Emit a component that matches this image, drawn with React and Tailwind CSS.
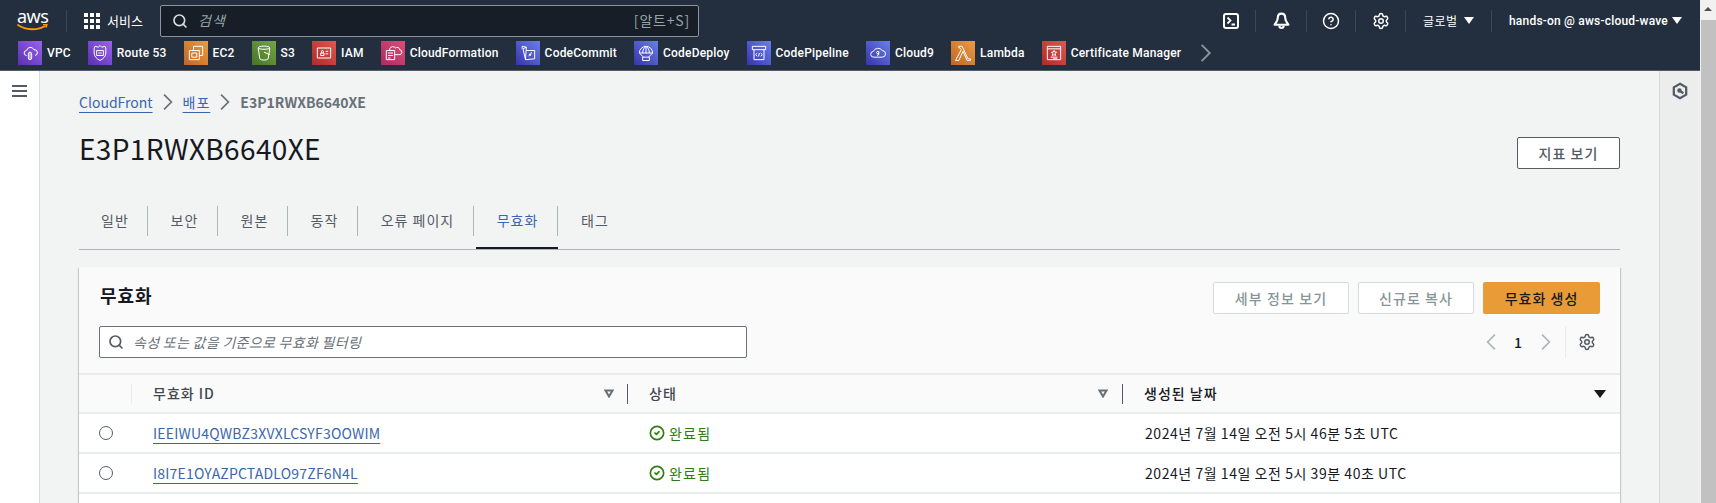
import React from 'react';
import { Search, Settings, CircleHelp, CircleCheck } from 'lucide-react';

const SANS = "font-['Noto_Sans_CJK_KR','Noto_Sans',sans-serif]";

const favorites = [
  { name: 'VPC', bg: 'from-[#5a30b0] to-[#9a62f0]', icon: 'M8 15a3 3 0 0 1 0-6 4.500 4.500 0 0 1 8.600-1A3.500 3.500 0 0 1 18 15M10 13a2 2 0 0 1 4 0v5a2 2 0 0 1-4 0zM12 11v9', next: 'mr-[17px]' },
  { name: 'Route 53', bg: 'from-[#5a30b0] to-[#9a62f0]', icon: 'M12 3l2 2 4-1 1 2v6c0 4-3 7-7 9-4-2-7-5-7-9V6l1-2 4 1zM8 9h8v6H8zM10 12h4', next: 'mr-[17px]' },
  { name: 'EC2', bg: 'from-[#c0662a] to-[#eb9c3c]', icon: 'M9 8V4h11v11h-4M4 9h12v11H4zM7 12h6v5H7z', next: 'mr-[17px]' },
  { name: 'S3', bg: 'from-[#44752a] to-[#76a640]', icon: 'M5 6c0-3 14-3 14 0l-2 13c-1 2-9 2-10 0zM5 6c1 2 13 2 14 0M12 11l7 3', next: 'mr-[17px]' },
  { name: 'IAM', bg: 'from-[#ad2b2b] to-[#e0574f]', icon: 'M4 6h16v12H4zM8 12h4v3H8zM9 12v-2a1 1 0 0 1 2 0v2M14 10h3M14 13h3', next: 'mr-[17px]' },
  { name: 'CloudFormation', bg: 'from-[#ac2b62] to-[#dc4d78]', icon: 'M4 9h10v11H4zM6 12h6M6 15h6M6 18h3M8 9V7a4 4 0 0 1 7-1 3 3 0 0 1 5 2 3 3 0 0 1-1 6h-5', next: 'mr-[17px]' },
  { name: 'CodeCommit', bg: 'from-[#3a33ad] to-[#6a7fe8]', icon: 'M5 4l5 1-1 15 11-1V9H10M5 4v3M9 20l-3-13 4-2M13 16l1-3 1 2 1-4', next: 'mr-[17px]' },
  { name: 'CodeDeploy', bg: 'from-[#3a33ad] to-[#6a7fe8]', icon: 'M4 12a8 8 0 0 1 16 0zM12 4v8M8 12c0-4 2-7 4-8 2 1 4 4 4 8M4 12l5 5M20 12l-5 5M8 17h8v4H8z', next: 'mr-[17px]' },
  { name: 'CodePipeline', bg: 'from-[#3a33ad] to-[#6a7fe8]', icon: 'M4 4h16v4H4zM6 8v12h12V8M10 12l-2 2 2 2M14 12l2 2-2 2M12.500 12l-1 4', next: 'mr-[17px]' },
  { name: 'Cloud9', bg: 'from-[#3a33ad] to-[#6a7fe8]', icon: 'M7 17a3.500 3.500 0 0 1-.5-7A6 6 0 0 1 17 9a4 4 0 0 1 0 8zM13 10.500a1.500 1.500 0 1 0 0 2h-.5M13 10v3a2 2 0 0 1-2 2', next: 'mr-[17px]' },
  { name: 'Lambda', bg: 'from-[#c0662a] to-[#eb9c3c]', icon: 'M7 4h4l7 15h3v2h-4L12 10l-5 11H3l7-13-2-2H7z', next: 'mr-[17px]' },
  { name: 'Certificate Manager', bg: 'from-[#ad2b2b] to-[#e0574f]', icon: 'M4 4h16v16H4zM4 7h16M12 9l1 2h2l-1.500 1.500L14 15l-2-1-2 1 .5-2.500L9 11h2zM8 17h8M11 19h5', next: 'mr-[15px]' },
];

function AwsLogo() {
  return (
    <div className="flex flex-col w-[32px]">
      <span className="text-[18px] leading-[13px] tracking-[-0.5px] font-['Noto_Sans',sans-serif] whitespace-nowrap">aws</span>
      <svg width="32" height="8" viewBox="0 0 32 8" className="block mt-[1px]">
        <path d="M1 1c8 5.500 20 5.500 27 1" fill="none" stroke="#ff9900" strokeWidth="1.800" strokeLinecap="round" />
        <path d="M26 .5l4-.5-1 3.500" fill="none" stroke="#ff9900" strokeWidth="1.500" />
      </svg>
    </div>
  );
}

function GridIcon() {
  return (
    <div className="grid grid-cols-3 gap-[2px] w-[16px]">
      {Array.from({ length: 9 }).map((_, i) => (
        <span key={i} className="w-[4px] h-[4px] bg-white" />
      ))}
    </div>
  );
}

function TerminalIcon() {
  return (
    <svg width="16" height="16" viewBox="0 0 16 16" fill="none" stroke="#fff" strokeWidth="2">
      <rect x="1" y="1" width="14" height="14" rx="2" />
      <path d="M4.500 4.500L7.500 7.500 4.500 10.500M8.500 11.500h3.500" strokeWidth="1.800" />
    </svg>
  );
}

function BellIcon() {
  return (
    <svg width="17" height="17" viewBox="0 0 16 16" fill="none" stroke="#fff" strokeWidth="2">
      <path d="M8 1.500c-2.500 0-3.500 2-3.500 4 0 3-1.500 4-3 6.500h13c-1.500-2.500-3-3.500-3-6.500 0-2-1-4-3.500-4z" strokeLinejoin="round" />
      <path d="M6 13a2 2 0 0 0 4 0" />
    </svg>
  );
}

function Chevron({ dir = 'right', size = 18, color = '#545b64' }) {
  return (
    <svg width={size} height={size} viewBox="0 0 16 16" fill="none" stroke={color} strokeWidth="1.500">
      <path d={dir === 'right' ? 'M4.500 1.500L11 8l-6.500 6.500' : 'M11.500 1.500L5 8l6.500 6.500'} />
    </svg>
  );
}

function FilterCaret() {
  return (
    <svg width="10" height="9" viewBox="0 0 10 9" fill="none" stroke="#687078" strokeWidth="2">
      <path d="M1.500 1.500h7L5 7.500z" />
    </svg>
  );
}

function Caret({ className }) {
  return <span className={`w-0 h-0 border-x-[5px] border-x-transparent border-t-[7px] ${className}`} />;
}

function Sep() {
  return <span className="w-px h-[22px] bg-[#414750]" />;
}

function TopBar() {
  return (
    <div className="h-[41px] flex items-center pl-[17px] text-white">
      <AwsLogo />
      <span className="w-px h-[22px] bg-[#414750] ml-[17px] mr-[17px]" />
      <GridIcon />
      <span className="ml-[7px] w-[53px] text-[13px]">서비스</span>
      <div className="w-[539px] h-[32px] bg-[#181e28] border border-[#8d9499] rounded-[2px] flex items-center pl-[11px] pr-[8px]">
        <Search size={16} strokeWidth={2.500} className="text-[#d5dbdb]" />
        <span className="ml-[10px] italic text-[14px] tracking-[1px] text-[#95a5a6]">검색</span>
        <span className="ml-auto text-[14px] tracking-[0.8px] text-[#95a5a6]">[알트+S]</span>
      </div>
      <div className="ml-auto flex items-center h-full">
        <span className="w-[16px] mr-[16px] flex"><TerminalIcon /></span>
        <Sep />
        <span className="w-[50px] flex justify-center"><BellIcon /></span>
        <Sep />
        <span className="w-[48px] flex justify-center"><CircleHelp size={18} strokeWidth={2} /></span>
        <Sep />
        <span className="w-[49px] flex justify-center"><Settings size={18} strokeWidth={2} /></span>
        <Sep />
        <span className="ml-[17px] text-[12px] tracking-[0.5px] w-[36px] whitespace-nowrap">글로벌</span>
        <Caret className="ml-[5px] mr-[17px] border-t-white" />
        <Sep />
        <span className="ml-[17px] text-[12px] font-['Roboto',sans-serif] font-medium tracking-[0.2px] w-[158px] whitespace-nowrap">hands-on @ aws-cloud-wave</span>
        <Caret className="ml-[5px] mr-[18px] border-t-white" />
      </div>
    </div>
  );
}

function FavoritesBar() {
  return (
    <div className="h-[29px] flex items-start pl-[18px] text-white">
      {favorites.map((f) => (
        <div key={f.name} className={`flex items-center h-[24px] gap-[5px] ${f.next}`}>
          <span className={`w-[24px] h-[24px] bg-gradient-to-tr ${f.bg} flex items-center justify-center`}>
            <svg width="20" height="20" viewBox="0 0 24 24" fill="none" stroke="#fff" strokeWidth="1.200">
              <path d={f.icon} />
            </svg>
          </span>
          <span className="text-[12px] font-['Roboto',sans-serif] font-medium tracking-[0.2px] whitespace-nowrap">{f.name}</span>
        </div>
      ))}
      <span className="h-[24px] flex items-center"><Chevron size={20} color="#8d9499" /></span>
    </div>
  );
}

function Tabs() {
  const tabs = [
    { label: '일반', w: 'w-[69px]' },
    { label: '보안', w: 'w-[70px]' },
    { label: '원본', w: 'w-[70px]' },
    { label: '동작', w: 'w-[70px]' },
    { label: '오류 페이지', w: 'w-[116px]' },
    { label: '무효화', w: 'w-[84px]', active: true },
    { label: '태그', w: 'w-[70px]', last: true },
  ];
  return (
    <div className="mt-[36px] h-[45px] flex border-b border-[#aab7b8]">
      {tabs.map((t) => (
        <div key={t.label} className={`${t.w} h-[44px] pt-[1px] relative flex items-start`}>
          <div className={`w-full h-[30px] pl-[4px] pb-[2px] flex items-center justify-center text-[14px] tracking-[1px] ${t.last ? '' : 'border-r border-[#aab7b8]'} ${t.active ? 'text-[#3a66ad]' : 'text-[#545b64]'}`}>
            {t.label}
          </div>
          {t.active && <span className="absolute left-[2px] right-0 bottom-0 h-[2px] bg-[#16191f]" />}
        </div>
      ))}
    </div>
  );
}

function OutlineBtn({ w, children, disabled }) {
  return (
    <button className={`${w} h-[32px] bg-white border rounded-[2px] text-[14px] font-medium tracking-[1.1px] ${disabled ? 'border-[#d5dbdb] text-[#879596]' : 'border-[#545b64] text-[#545b64]'}`}>
      {children}
    </button>
  );
}

function HeaderCell({ className, label, dark, caret }) {
  return (
    <div className={`flex items-center h-[20px] ${className}`}>
      <span className={`text-[14px] font-medium tracking-[1px] ${dark ? 'text-[#16191f]' : 'text-[#414750]'}`}>{label}</span>
      <span className="ml-auto flex items-center">{caret}</span>
    </div>
  );
}

function Row({ id, date }) {
  return (
    <div className="h-[40px] flex items-center border-b-2 border-[#eaeded] text-[14px]">
      <div className="w-[74px] pl-[20px]">
        <span className="block w-[14px] h-[14px] rounded-full border border-[#545b64] bg-white" />
      </div>
      <div className="w-[475px]">
        <a className="text-[#3a66ad] tracking-[0.2px] underline underline-offset-[4px]">{id}</a>
      </div>
      <div className="w-[517px] pl-[21px] flex items-center text-[#2e7d12]">
        <CircleCheck size={16} strokeWidth={2.500} />
        <span className="ml-[4px] tracking-[1.200px]">완료됨</span>
      </div>
      <div className="text-[#16191f] tracking-[0.550px]">{date}</div>
    </div>
  );
}

function Card() {
  return (
    <div className="mt-[17px] bg-white shadow-[0_1px_1px_0_rgba(0,28,36,0.3),1px_1px_1px_0_rgba(0,28,36,0.15),-1px_1px_1px_0_rgba(0,28,36,0.15)]">
      <div className="h-[108px] bg-[#fafafa] border-b-2 border-[#eaeded] pl-[20px] pr-[20px]">
        <div className="flex items-start pt-[15px] h-[59px]">
          <h2 className="ml-[1px] text-[18px] font-bold leading-[28px] tracking-[1px] text-[#16191f] mt-[-1px]">무효화</h2>
          <div className="ml-auto flex gap-[9px]">
            <OutlineBtn w="w-[136px]" disabled>세부 정보 보기</OutlineBtn>
            <OutlineBtn w="w-[116px]" disabled>신규로 복사</OutlineBtn>
            <button className="w-[117px] h-[32px] bg-[#e99b38] rounded-[2px] text-[14px] text-[#16191f] font-medium tracking-[1px]">무효화 생성</button>
          </div>
        </div>
        <div className="flex items-center">
          <div className="w-[648px] h-[32px] bg-white border border-[#687078] rounded-[2px] flex items-center pl-[8px]">
            <Search size={16} strokeWidth={2.500} className="text-[#545b64]" />
            <span className="ml-[9px] italic text-[14px] tracking-[0.3px] text-[#687078]">속성 또는 값을 기준으로 무효화 필터링</span>
          </div>
          <div className="ml-auto flex items-center h-[32px]">
            <Chevron dir="left" color="#aab7b8" />
            <span className="ml-[14px] mr-[15px] w-[8px] text-center text-[14px] font-medium text-[#16191f]">1</span>
            <Chevron color="#aab7b8" />
            <span className="w-px h-[32px] bg-[#eaeded] ml-[10px] mr-[12px]" />
            <Settings size={18} strokeWidth={2} className="text-[#545b64] mr-[4px]" />
          </div>
        </div>
      </div>
      <div className="h-[39px] bg-[#fafafa] flex items-center border-b-2 border-[#eaeded]">
        <div className="w-[53px] h-[20px] border-r border-[#eaeded]" />
        <HeaderCell className="w-[496px] pl-[21px] pr-[13px] border-r border-[#545b64]" label="무효화 ID" caret={<FilterCaret />} />
        <HeaderCell className="w-[495px] pl-[21px] pr-[14px] border-r border-[#545b64]" label="상태" caret={<FilterCaret />} />
        <HeaderCell className="flex-1 pl-[21px] pr-[14px]" label="생성된 날짜" dark caret={<Caret className="border-t-[#16191f] !border-x-[6px] !border-t-[8px]" />} />
      </div>
      <Row id="IEEIWU4QWBZ3XVXLCSYF3OOWIM" date="2024년 7월 14일 오전 5시 46분 5초 UTC" />
      <Row id="I8I7E1OYAZPCTADLO97ZF6N4L" date="2024년 7월 14일 오전 5시 39분 40초 UTC" />
      <div className="h-[40px]" />
    </div>
  );
}

function Scrollbar() {
  return (
    <div className="w-[16px] h-full bg-[#f1f1f1] flex flex-col items-center">
      <div className="h-[17px] flex items-center">
        <span className="w-0 h-0 border-x-[4px] border-x-transparent border-b-[4px] border-b-[#505050]" />
      </div>
      <div className="flex-1 w-[15px] self-end bg-[#c1c1c1] mt-[3px]" />
    </div>
  );
}

export default function App() {
  return (
    <div className={`h-[503px] w-full overflow-hidden flex ${SANS}`}>
      <div className="flex-1 min-w-0 flex flex-col">
        <div className="bg-[#232f3e] border-b border-[#545b64] h-[71px]">
          <TopBar />
          <FavoritesBar />
        </div>
        <div className="flex-1 flex min-h-0">
          <div className="w-[40px] bg-white border-r border-[#d5dbdb] pt-[14px] flex flex-col items-center pr-[1px]">
            <span className="w-[15px] h-[2px] bg-[#545b64]" />
            <span className="w-[15px] h-[2px] bg-[#545b64] mt-[3px]" />
            <span className="w-[15px] h-[2px] bg-[#545b64] mt-[3px]" />
          </div>
          <div className="flex-1 min-w-0 bg-[#f2f3f3] pl-[39px] pr-[39px]">
            <div className="h-[24px] mt-[19px] flex items-center text-[14px] gap-[6px]">
              <a className="text-[#3a66ad] underline underline-offset-[4px]">CloudFront</a>
              <Chevron color="#687078" />
              <a className="text-[#3a66ad] tracking-[1px] underline underline-offset-[4px]">배포</a>
              <Chevron color="#687078" />
              <span className="text-[#687078] font-bold">E3P1RWXB6640XE</span>
            </div>
            <div className="flex items-center h-[32px] mt-[23px]">
              <h1 className="text-[28px] tracking-[0.35px] text-[#16191f] mt-[-10px]">E3P1RWXB6640XE</h1>
              <div className="ml-auto"><OutlineBtn w="w-[103px]">지표 보기</OutlineBtn></div>
            </div>
            <Tabs />
            <Card />
          </div>
          <div className="w-[41px] bg-[#eceeee] border-l border-[#d5dbdb] flex justify-center pt-[11px]">
            <svg width="18" height="18" viewBox="0 0 16 16" fill="none" stroke="#545b64" strokeWidth="2">
              <path d="M8 1.500l5.500 3.200v6.600L8 14.500l-5.500-3.200V4.700z" />
              <circle cx="7.500" cy="7.500" r="1" fill="#545b64" />
              <path d="M8 8l3 2" />
            </svg>
          </div>
        </div>
      </div>
      <Scrollbar />
    </div>
  );
}
